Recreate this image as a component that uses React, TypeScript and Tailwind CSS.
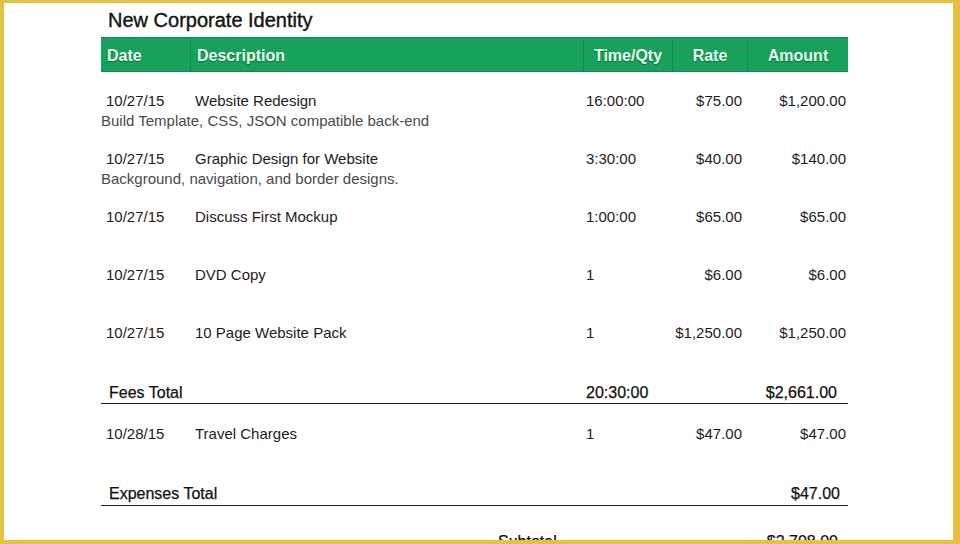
import React from "react";

type Row = {
  date: string;
  desc: string;
  sub?: string;
  time: string;
  rate: string;
  amount: string;
  h: string;
};

const rows: Row[] = [
  { date: "10/27/15", desc: "Website Redesign", sub: "Build Template, CSS, JSON compatible back-end", time: "16:00:00", rate: "$75.00", amount: "$1,200.00", h: "h-[58px]" },
  { date: "10/27/15", desc: "Graphic Design for Website", sub: "Background, navigation, and border designs.", time: "3:30:00", rate: "$40.00", amount: "$140.00", h: "h-[58px]" },
  { date: "10/27/15", desc: "Discuss First Mockup", time: "1:00:00", rate: "$65.00", amount: "$65.00", h: "h-[58px]" },
  { date: "10/27/15", desc: "DVD Copy", time: "1", rate: "$6.00", amount: "$6.00", h: "h-[58px]" },
  { date: "10/27/15", desc: "10 Page Website Pack", time: "1", rate: "$1,250.00", amount: "$1,250.00", h: "h-[59px]" },
];

const cols = "grid grid-cols-[89px_393px_89px_75px_101px]";

function DataRow({ r }: { r: Row }) {
  return (
    <div className={`${r.h} flex flex-col`}>
      <div className={`${cols} leading-[20px] text-[15px] text-[#1c1c1c]`}>
        <div className="pl-[5px]">{r.date}</div>
        <div className="pl-[5px]">{r.desc}</div>
        <div className="pl-[3px]">{r.time}</div>
        <div className="text-right pr-[5px]">{r.rate}</div>
        <div className="text-right pr-[2px]">{r.amount}</div>
      </div>
      {r.sub && (
        <div className="leading-[20px] text-[15px] text-[#4a4a4a] whitespace-nowrap">{r.sub}</div>
      )}
    </div>
  );
}

export default function App() {
  return (
    <div
      className="w-[960px] h-[544px] box-border overflow-hidden bg-white border-solid border-[#e3c23f] border-t-[3px] border-l-[4px] border-r-[7px] border-b-[4px]"
      style={{ fontFamily: '"Liberation Sans", Arial, sans-serif' }}
    >
      <div className="pl-[97px] pt-[3px] w-[848px]">
        <div className="h-[28px] leading-[28px] text-[20px] text-[#141414] pl-[7px] whitespace-nowrap [-webkit-text-stroke:0.4px_#141414]">
          New Corporate Identity
        </div>
        <div className="mt-[3px] w-[747px]">
          <div
            className={`${cols} h-[35px] box-border bg-[#17a15b] border-y border-[#12894c] pt-[2px] text-[16px] font-bold text-[#eafff2] [text-shadow:0_1px_1px_rgba(0,40,20,0.45)]`}
          >
            <div className="flex items-center pl-[6px]">Date</div>
            <div className="flex items-center pl-[6px] border-l border-[#12894c]">Description</div>
            <div className="flex items-center justify-center border-l border-[#12894c]">Time/Qty</div>
            <div className="flex items-center justify-center border-l border-[#12894c]">Rate</div>
            <div className="flex items-center justify-center border-l border-[#12894c]">Amount</div>
          </div>

          <div className="mt-[19px] flex flex-col">
            {rows.map((r, i) => (
              <DataRow key={i} r={r} />
            ))}
          </div>

          <div className={`${cols} h-[22px] box-border border-b border-[#222] leading-[21px] text-[16px] text-[#111] [-webkit-text-stroke:0.25px_#111]`}>
            <div className="col-span-2 pl-[8px]">Fees Total</div>
            <div className="pl-[3px]">20:30:00</div>
            <div></div>
            <div className="text-right pr-[11px]">$2,661.00</div>
          </div>

          <div className="mt-[20px] h-[59px]">
            <div className={`${cols} leading-[20px] text-[15px] text-[#1c1c1c]`}>
              <div className="pl-[5px]">10/28/15</div>
              <div className="pl-[5px]">Travel Charges</div>
              <div className="pl-[3px]">1</div>
              <div className="text-right pr-[5px]">$47.00</div>
              <div className="text-right pr-[2px]">$47.00</div>
            </div>
          </div>

          <div className={`${cols} h-[23px] box-border border-b border-[#222] leading-[22px] text-[16px] text-[#111] [-webkit-text-stroke:0.25px_#111]`}>
            <div className="col-span-2 pl-[8px]">Expenses Total</div>
            <div></div>
            <div></div>
            <div className="text-right pr-[8px]">$47.00</div>
          </div>

          <div className="mt-[25px] flex leading-[21px] text-[16px] text-[#111] [-webkit-text-stroke:0.25px_#111]">
            <div className="ml-[397px] flex-1">Subtotal</div>
            <div className="pr-[10px]">$2,708.00</div>
          </div>
        </div>
      </div>
    </div>
  );
}
